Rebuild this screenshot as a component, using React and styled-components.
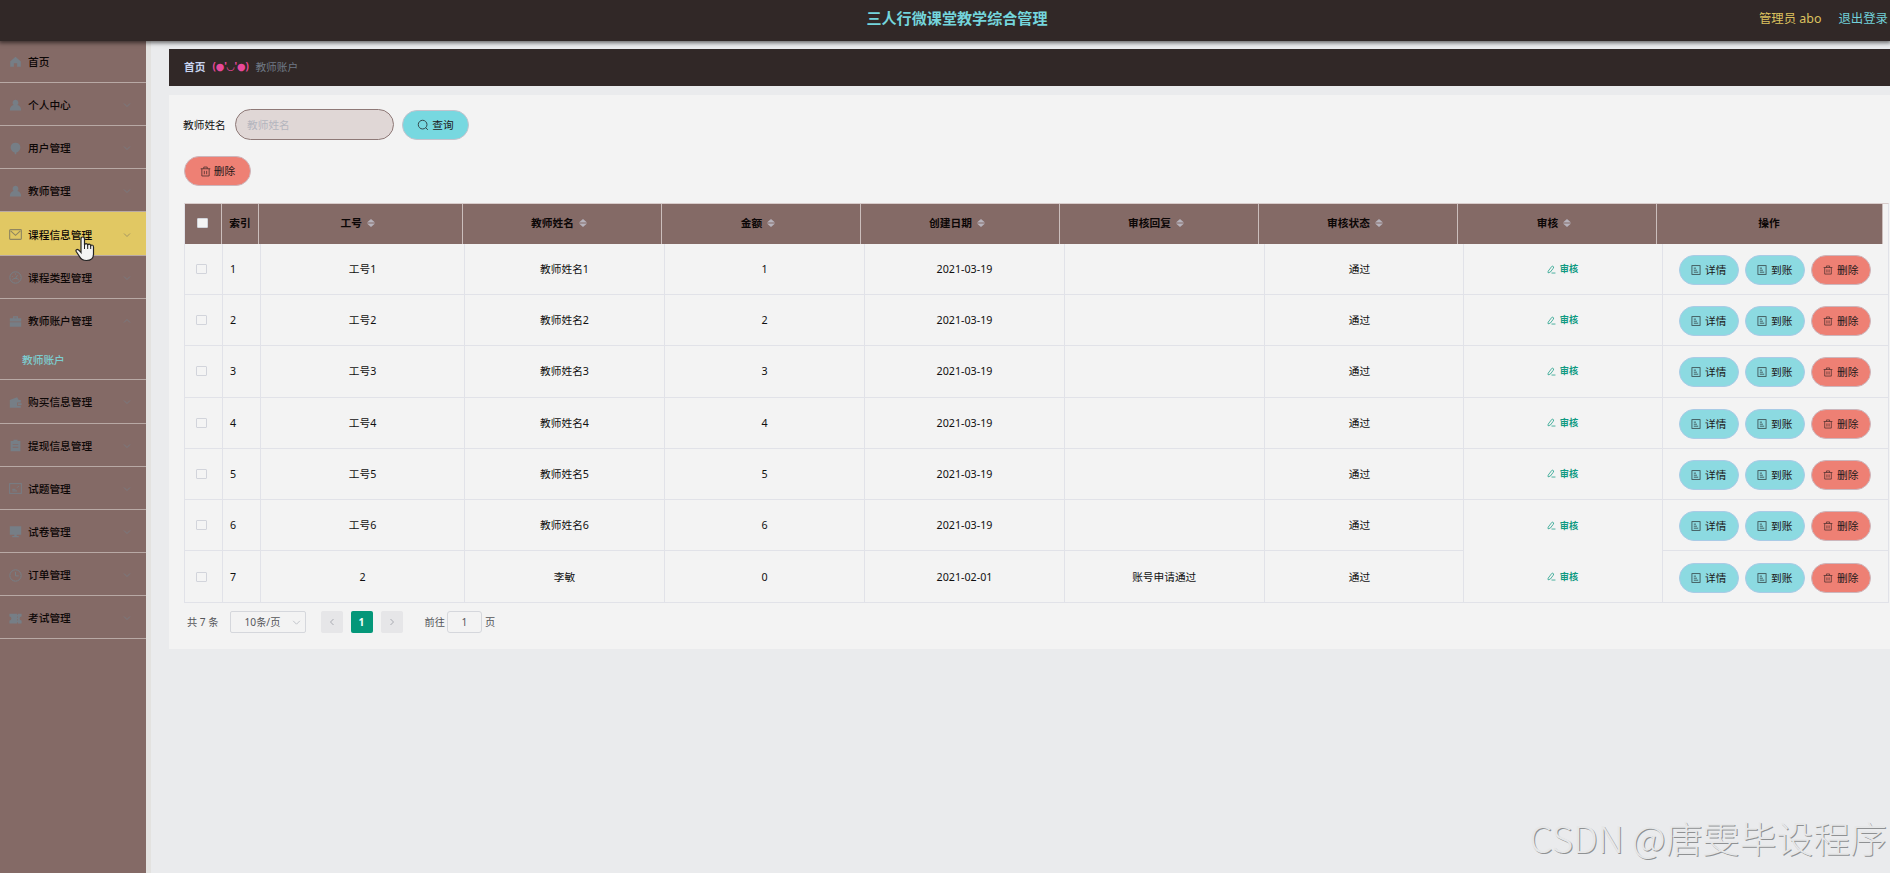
import React from "react";
import styled, { createGlobalStyle, css } from "styled-components";

const GlobalStyle = createGlobalStyle`
  *, *::before, *::after { box-sizing: border-box; }
  body {
    margin: 0;
    background: #eaebed;
    color: #101010;
    font: 10.7px/16px "Noto Sans", "Noto Sans CJK SC", sans-serif;
    overflow: hidden;
  }
`;

const Page = styled.div`
  position: relative;
  display: flex;
  flex-direction: column;
  height: 873px;
  overflow: hidden;
`;

const Header = styled.header`
  position: relative;
  z-index: 2;
  display: grid;
  grid-template-columns: 1fr auto 1fr;
  align-items: center;
  flex: none;
  height: 41px;
  padding: 0 2px 3px 26px;
  background: #312827;
  box-shadow: 0 1px 4px 1px rgba(0, 0, 0, 0.55);
`;

const Title = styled.h1`
  grid-column: 2;
  margin: 0;
  padding-bottom: 4px;
  font: 700 15.1px/20px "Noto Sans CJK SC", sans-serif;
  color: #74d5dc;
`;

const UserArea = styled.div`
  display: flex;
  justify-content: flex-end;
  gap: 17px;
  font-size: 12.4px;
  color: #72d0d9;
`;

const UserName = styled.span`
  color: #dcc25f;
`;

const Body = styled.div`
  display: flex;
  flex: 1;
  min-height: 0;
`;

const Sidebar = styled.nav`
  flex: none;
  width: 151px;
  margin-top: -1.2px;
  background: #846a66;
  border-right: 5px solid #e3e2e0;
`;

const MenuItem = styled.div`
  display: flex;
  align-items: center;
  height: 43.17px;
  padding: 2px 15px 0 9px;
  color: #0c0706;
  border-bottom: ${(p) => (p.$open ? "0" : "1px solid #b8a9a5")};
  background: ${(p) => (p.$active ? "#e1c863" : "transparent")};
  svg { color: ${(p) => (p.$active ? "#8f8560" : "#767e86")}; }
`;

const MenuLabel = styled.span`
  flex: 1;
  margin-left: 6px;
  font-weight: 500;
`;

const SubMenuItem = styled.div`
  height: 38.5px;
  padding: 10px 0 0 22px;
  font-weight: 500;
  color: #7ccdd0;
  border-bottom: 1px solid #b8a9a5;
`;

const Main = styled.main`
  flex: 1;
  min-width: 0;
  padding: 8px 0 0 18px;
`;

const Breadcrumb = styled.div`
  display: flex;
  align-items: center;
  gap: 7px;
  height: 37px;
  padding: 0 0 1px 15px;
  background: #312827;
  color: #6f7985;
`;

const Crumb = styled.span`
  color: #c9d5f0;
  font-weight: 700;
`;

const Face = styled.span`
  width: 36px;
  color: #e9489b;
  font-weight: 700;
  white-space: nowrap;
  font-size: 9.8px;
  font-family: "Noto Sans", "DejaVu Sans", sans-serif;
`;

const Panel = styled.section`
  height: 554px;
  margin-top: 9px;
  padding: 14px 0 0 15px;
  background: #f3f3f3;
`;

const Search = styled.div`
  display: flex;
  align-items: center;
  height: 31px;
`;

const SearchLabel = styled.span`
  width: 43px;
  margin-left: -1px;
  white-space: nowrap;
`;

const SearchInput = styled.input`
  width: 159px;
  height: 31px;
  margin: 0 8px 0 9px;
  padding: 0 11px;
  border: 1px solid #8e7977;
  border-radius: 16px;
  background: #e0d7d6;
  font: inherit;
  &::placeholder { color: #b4b5be; opacity: 1; }
`;

const Button = styled.button`
  display: flex;
  align-items: center;
  justify-content: center;
  gap: ${(p) => (p.$small ? "4px" : "3px")};
  width: ${(p) => (p.$small ? "60px" : "67px")};
  height: 30px;
  padding: 0;
  font: inherit;
  color: #1b1718;
  border: 1px solid #c3c3cd;
  border-radius: 15px;
  background: #77d8e0;
  ${(p) => p.$small && css`background: #8cdae1; border-color: #a9cbe6;`}
  ${(p) => p.$danger && css`background: #ee8074; border-color: #ccb6bc;`}
  svg { opacity: 0.75; }
`;

const Toolbar = styled.div`
  display: flex;
  margin: 16px 0 17px;
`;

const Table = styled.div`
  width: 1705px;
  border: 1px solid #e1e2e8;
  border-top-color: #d8cccb;
`;

const HeadRow = styled.div`
  display: grid;
  grid-template-columns: 37px 37px 203.5px 199px 199px 199px 199px 199px 199px 226px;
  height: 40px;
`;

const HeadCell = styled.div`
  display: flex;
  align-items: center;
  justify-content: center;
  gap: 5px;
  padding: 0 ${(p) => (p.$sortable ? "5px" : "0")} 2px 0;
  font-weight: 600;
  color: #0c0706;
  background: #846a66;
  border-right: 1px solid #cbbebc;
`;

const BodyRow = styled.div`
  display: grid;
  grid-template-columns: 38px 38px 204px 200px 200px 200px 199.5px 199px 199px 1fr;
  height: 51.2px;
`;

const Cell = styled.div`
  display: flex;
  align-items: center;
  justify-content: ${(p) => (p.$left ? "flex-start" : "center")};
  gap: 6px;
  padding: ${(p) => (p.$left ? "0 0 0 7px" : p.$status ? "0 8px 0 0" : "0")};
  border-right: ${(p) => (p.$end ? "0" : "1px solid #e1e2e8")};
  border-bottom: ${(p) => (p.$plain ? "0" : "1px solid #e1e2e8")};
`;

const Actions = styled.div`
  display: flex;
  gap: 6px;
  padding: 2px 1px 0 0;
`;

const Checkbox = styled.span`
  width: 11px;
  height: 10px;
  margin-right: ${(p) => (p.$head ? "1px" : "4px")};
  border: 1px solid #d2d4db;
  border-radius: 1px;
  background: #f4f4f4;
`;

const AuditLink = styled.span`
  display: flex;
  align-items: center;
  gap: 4px;
  font-size: 9.2px;
  font-weight: 600;
  color: #109a82;
`;

const Pagination = styled.div`
  display: flex;
  align-items: center;
  margin: 8px 0 0 3px;
  height: 22px;
  font-size: 10.2px;
  color: #55565a;
`;

const PageSize = styled.div`
  display: flex;
  align-items: center;
  justify-content: space-between;
  width: 76px;
  height: 22px;
  margin: 0 15px 0 11px;
  padding: 0 4px 0 14px;
  border: 1px solid #d5d7dc;
  border-radius: 2px;
  svg { color: #b9bcc4; }
`;

const PageButton = styled.div`
  display: flex;
  align-items: center;
  justify-content: center;
  width: 22px;
  height: 22px;
  margin-right: 8px;
  border-radius: 2px;
  font-weight: 700;
  color: ${(p) => (p.$active ? "#f2fffc" : "#a9abb2")};
  background: ${(p) => (p.$active ? "#049779" : "#e6e6e8")};
`;

const JumpInput = styled.div`
  width: 35px;
  height: 22px;
  margin: 0 3px 0 2px;
  line-height: 20px;
  text-align: center;
  border: 1px solid #d5d7dc;
  border-radius: 3px;
`;

const JumpLabel = styled.span`
  margin-left: 14px;
`;

const Pointer = styled.svg`
  position: absolute;
  z-index: 3;
  left: 75px;
  top: 236px;
`;

const Watermark = styled.div`
  position: absolute;
  right: 3px;
  bottom: 14px;
  font: 300 36.9px/44px "Noto Sans CJK SC", sans-serif;
  white-space: nowrap;
  color: #e6e7e8;
  text-shadow: 1px 1px 0 #8f9193;
`;

const glyphs = {
  home: <path fill="currentColor" d="M8 2 1.500 8v6.500H6V10h4v4.500h4.500V8z" />,
  user: <path fill="currentColor" d="M8 1a3.600 3.600 0 0 1 2.300 6.400C13 8 15 10 15 14H1c0-4 2-6 4.700-6.600A3.600 3.600 0 0 1 8 1z" />,
  balloon: <path fill="currentColor" d="M8 1c3.700 0 6 2.500 6 5.800 0 3-2.500 5.600-5 6.200V15H7v-2c-2.500-.6-5-3.200-5-6.200C2 3.500 4.300 1 8 1z" />,
  mail: (
    <g fill="none" stroke="currentColor" strokeWidth="1.400">
      <rect x="0.800" y="2" width="14.400" height="12" rx="1" />
      <path d="m2 3.500 6 5.500 6-5.500" />
    </g>
  ),
  gauge: (
    <g fill="none" stroke="currentColor" strokeWidth="1.200">
      <circle cx="8" cy="8" r="7" />
      <path d="M4 11a5 5 0 0 1 8 0M8 9l2.500-4M4 6.500l1 .8M8 3v1.500" />
    </g>
  ),
  bag: <path fill="currentColor" d="M5 4V1.500h6V4h4v4H1V4zm1.500 0h3V3h-3zM1 9h14v5.500H1z" />,
  wallet: <path fill="currentColor" d="M1 5 10 1.500 12 5h2.500v3H10v4h4.500v2.500H1zM11 9h4.500v2H11z" />,
  clipboard: (
    <path fill="currentColor" fillRule="evenodd" d="M5.500 1h5v1.500H14V15H2V2.500h3.500zM4.500 6v1.200h7V6zm0 3.500v1.200h7V9.500z" />
  ),
  card: (
    <g fill="none" stroke="currentColor" strokeWidth="1.200">
      <rect x="0.800" y="2" width="14.400" height="12" />
      <path d="M4 9h4M4 11h6M10 7l2-2" />
    </g>
  ),
  monitor: <path fill="currentColor" d="M1 1.500h14V12H9.500v1.500H12V15H4v-1.500h2.500V12H1z" />,
  clock: (
    <g fill="none" stroke="currentColor" strokeWidth="1.200">
      <circle cx="8" cy="8" r="7" />
      <path d="M8 3.500V8.500h4" />
    </g>
  ),
  ticket: <path fill="currentColor" d="M0.500 2H10v1.500h1V2h4.500v3.500a2.500 2.500 0 0 0 0 5V14H11v-1.500h-1V14H.5v-3.500a2.500 2.500 0 0 0 0-5zM10 5.500v1.500h1V5.500zm0 3.500v1.500h1V9z" />,
  search: (
    <g fill="none" stroke="currentColor" strokeWidth="1.300">
      <circle cx="7.500" cy="7.500" r="5.800" />
      <path d="m11.500 11.500 3 3" />
    </g>
  ),
  trash: (
    <path fill="none" stroke="currentColor" strokeWidth="1.200" d="M1 4h14M5.500 4V1.500h5V4M2.700 4v10.500h10.600V4M6.300 7v5M9.700 7v5" />
  ),
  doc: (
    <g fill="none" stroke="currentColor" strokeWidth="1.300">
      <rect x="1.500" y="1" width="13" height="14" />
      <path d="M4.500 5h3.500M4.500 8.300h5M4.500 11.500h7" />
    </g>
  ),
  edit: (
    <path fill="none" stroke="currentColor" strokeWidth="1.300" d="M2 11 8.500 2.500q2-1.500 3.500 1Q12.300 5 6 12.500L2 14zM8 14.300h7" />
  ),
  down: <path fill="none" stroke="currentColor" strokeWidth="1.500" d="m2 5 6 6 6-6" />,
  up: <path fill="none" stroke="currentColor" strokeWidth="1.500" d="m2 11 6-6 6 6" />,
  left: <path fill="none" stroke="currentColor" strokeWidth="2" d="m11 2-6 6 6 6" />,
  right: <path fill="none" stroke="currentColor" strokeWidth="2" d="m5 2 6 6-6 6" />,
  sort: <path fill="#b6b2bb" d="M8 0 16 7H0zM0 9h16l-8 7z" />,
};

const Icon = ({ name, size = 12 }) => (
  <svg width={size} height={size} viewBox="0 0 16 16">
    {glyphs[name]}
  </svg>
);

const menu = [
  { icon: "home", label: "首页", leaf: true },
  { icon: "user", label: "个人中心" },
  { icon: "balloon", label: "用户管理" },
  { icon: "user", label: "教师管理" },
  { icon: "mail", label: "课程信息管理", active: true },
  { icon: "gauge", label: "课程类型管理" },
  { icon: "bag", label: "教师账户管理", child: "教师账户" },
  { icon: "wallet", label: "购买信息管理" },
  { icon: "clipboard", label: "提现信息管理" },
  { icon: "card", label: "试题管理" },
  { icon: "monitor", label: "试卷管理" },
  { icon: "clock", label: "订单管理" },
  { icon: "ticket", label: "考试管理" },
];

const columns = ["工号", "教师姓名", "金额", "创建日期", "审核回复", "审核状态", "审核"];

const rows = [
  ...[1, 2, 3, 4, 5, 6].map((n) => [`工号${n}`, `教师姓名${n}`, n, "2021-03-19", "", "通过"]),
  ["2", "李敏", 0, "2021-02-01", "账号申请通过", "通过"],
];

const SideMenu = () => (
  <Sidebar>
    {menu.map((m) => (
      <React.Fragment key={m.label}>
        <MenuItem $active={m.active} $open={Boolean(m.child)}>
          <Icon name={m.icon} size={13} />
          <MenuLabel>{m.label}</MenuLabel>
          {!m.leaf && <Icon name={m.child ? "up" : "down"} size={8} />}
        </MenuItem>
        {m.child && <SubMenuItem>{m.child}</SubMenuItem>}
      </React.Fragment>
    ))}
  </Sidebar>
);

const DataTable = () => (
  <Table>
    <HeadRow>
      <HeadCell><Checkbox $head /></HeadCell>
      <HeadCell>索引</HeadCell>
      {columns.map((c) => (
        <HeadCell key={c} $sortable>
          {c}
          <Icon name="sort" size={8} />
        </HeadCell>
      ))}
      <HeadCell>操作</HeadCell>
    </HeadRow>
    {rows.map((r, i) => (
      <BodyRow key={i}>
        <Cell $plain={i === 6}><Checkbox /></Cell>
        <Cell $left $plain={i === 6}>{i + 1}</Cell>
        {r.map((v, j) => (
          <Cell key={j} $plain={i === 6} $status={j === 5}>{v}</Cell>
        ))}
        <Cell $plain={i >= 5}>
          <AuditLink>
            <Icon name="edit" size={9} />
            审核
          </AuditLink>
        </Cell>
        <Cell $end $plain={i === 6}>
          <Actions>
            <Button $small><Icon name="doc" size={10} />详情</Button>
            <Button $small><Icon name="doc" size={10} />到账</Button>
            <Button $small $danger><Icon name="trash" size={10} />删除</Button>
          </Actions>
        </Cell>
      </BodyRow>
    ))}
  </Table>
);

export default function App() {
  return (
    <Page>
      <GlobalStyle />
      <Header>
        <Title>三人行微课堂教学综合管理</Title>
        <UserArea>
          <UserName>管理员 abo</UserName>
          <span>退出登录</span>
        </UserArea>
      </Header>
      <Body>
        <SideMenu />
        <Main>
          <Breadcrumb>
            <Crumb>首页</Crumb>
            <Face>(●'◡'●)</Face>
            <span>教师账户</span>
          </Breadcrumb>
          <Panel>
            <Search>
              <SearchLabel>教师姓名</SearchLabel>
              <SearchInput placeholder="教师姓名" />
              <Button><Icon name="search" />查询</Button>
            </Search>
            <Toolbar>
              <Button $danger><Icon name="trash" size={11} />删除</Button>
            </Toolbar>
            <DataTable />
            <Pagination>
              <span>共 7 条</span>
              <PageSize>
                10条/页
                <Icon name="down" size={9} />
              </PageSize>
              <PageButton><Icon name="left" size={8} /></PageButton>
              <PageButton $active>1</PageButton>
              <PageButton><Icon name="right" size={8} /></PageButton>
              <JumpLabel>前往</JumpLabel>
              <JumpInput>1</JumpInput>
              <span>页</span>
            </Pagination>
          </Panel>
        </Main>
      </Body>
      <Pointer width="20" height="26" viewBox="0 0 20 26">
        <path
          d="M6 3q0-2 1.700-2T9.500 3v6q.3-1.300 1.600-1.300T12.700 9q.3-.8 1.500-.8t1.500 1.500q.3-.7 1.300-.7 1.500 0 1.500 2v7q0 6.500-7 6.500-5 0-7-4L1.200 15.500q-.7-1.500.7-2t4.100 3z"
          fill="#f4f4f4"
          stroke="#222"
          strokeWidth="1.200"
        />
        <path d="M9.500 9v4M12.700 9.500V13M15.700 10v3" stroke="#222" strokeWidth="1" />
      </Pointer>
      <Watermark>CSDN @唐雯毕设程序</Watermark>
    </Page>
  );
}
